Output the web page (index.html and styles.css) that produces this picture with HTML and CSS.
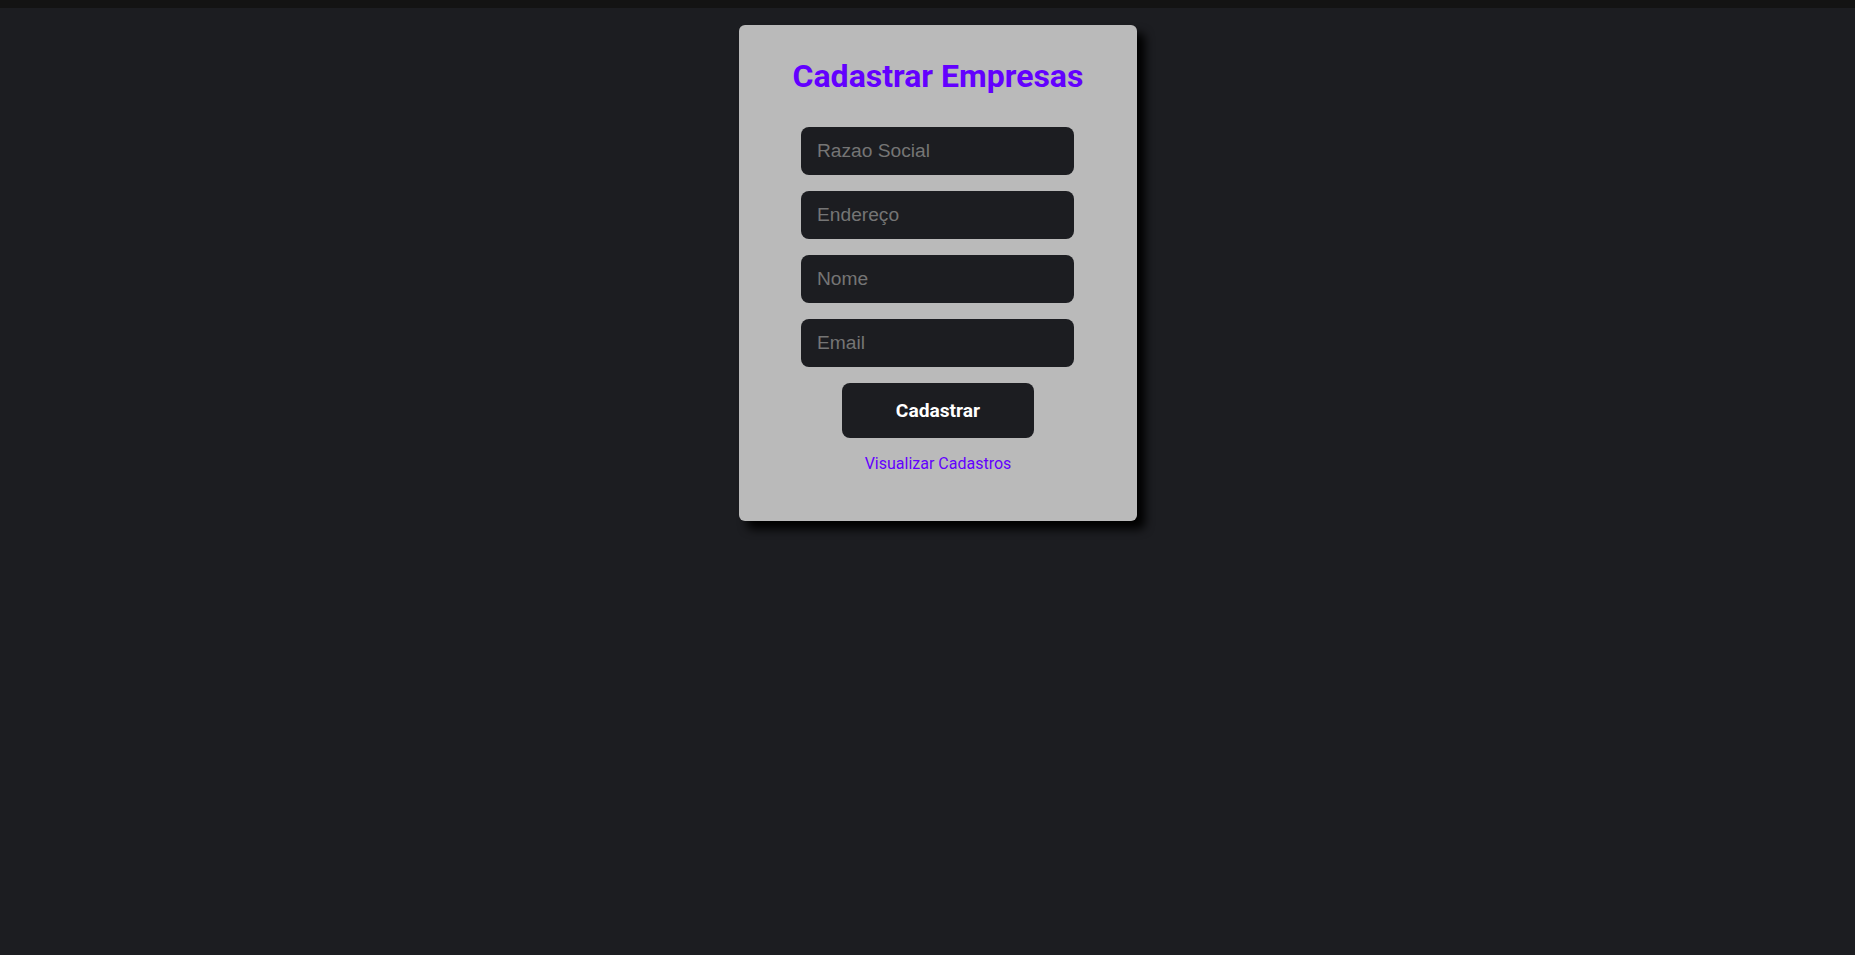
FILE: index.html
```html
<!DOCTYPE html>
<html lang="pt-BR">
<head>
<meta charset="utf-8">
<title>Cadastrar Empresas</title>
<link rel="stylesheet" href="styles.css">
</head>
<body>
<div class="topbar"></div>
<main class="page">
  <form class="card">
    <h1 class="title">Cadastrar Empresas</h1>
    <input class="field" type="text" placeholder="Razao Social">
    <input class="field" type="text" placeholder="Endereço">
    <input class="field" type="text" placeholder="Nome">
    <input class="field" type="email" placeholder="Email">
    <button class="btn" type="button">Cadastrar</button>
    <a class="link" href="#">Visualizar Cadastros</a>
  </form>
</main>
</body>
</html>
```
FILE: styles.css
```css
html, body {
  margin: 0;
  padding: 0;
  background: #1c1d21;
  height: 100%;
}
body {
  font-family: Roboto, "Liberation Sans", sans-serif;
}
.topbar {
  height: 8px;
  background: #131313;
}
.page {
  display: flex;
  justify-content: center;
  padding-top: 17px;
  padding-left: 21px;
}
.card {
  width: 398px;
  box-sizing: border-box;
  background: #bababa;
  border-radius: 6px;
  box-shadow: 8px 8px 10px #000;
  display: flex;
  flex-direction: column;
  align-items: center;
  padding: 33px 0 48px 0;
}
.title {
  margin: 0 0 31px;
  font-size: 32px;
  font-weight: 700;
  line-height: 37.5px;
  color: #6300ff;
}
.field {
  width: 273px;
  height: 48px;
  box-sizing: border-box;
  margin: 0 1px 16px 0;
  padding: 0 16px;
  border: none;
  border-radius: 8px;
  background: #1c1d21;
  color: #ddd;
  font-family: "Liberation Sans", Arial, sans-serif;
  font-size: 19.2px;
  outline: none;
}
.field::placeholder {
  color: #757575;
}
.btn {
  width: 192px;
  height: 55px;
  border: none;
  border-radius: 8px;
  background: #1c1d21;
  color: #fff;
  font-family: Roboto, sans-serif;
  font-weight: 700;
  font-size: 19.2px;
  margin: 0 0 16px;
  cursor: pointer;
}
.link {
  color: #6300ff;
  text-decoration: none;
  font-size: 16px;
  line-height: 19px;
}
```
